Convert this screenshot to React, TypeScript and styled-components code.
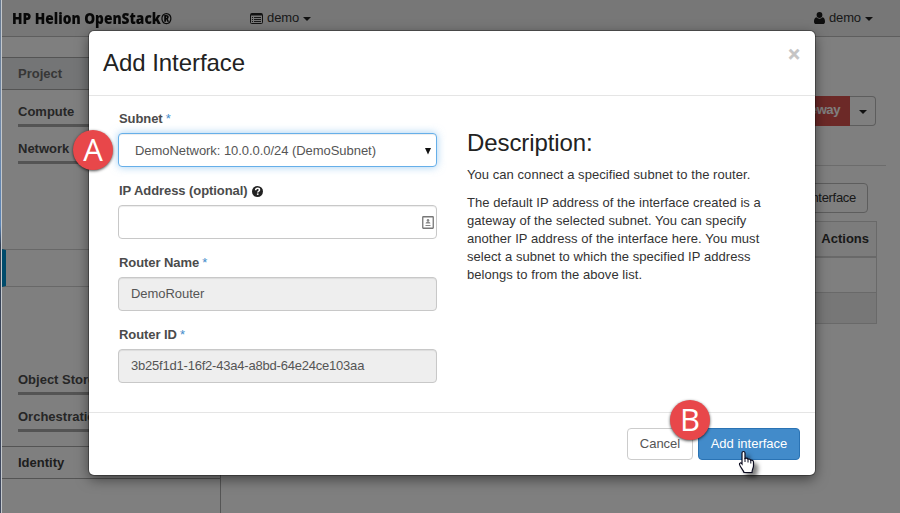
import React from "react";
import styled, { createGlobalStyle } from "styled-components";

const GlobalStyle = createGlobalStyle`
  *, *::before, *::after { box-sizing: border-box; }
  html, body { margin: 0; padding: 0; overflow: hidden; }
  body { font-family: "Liberation Sans", Arial, sans-serif; font-size: 13px; line-height: 18px; color: #333; }
  h3, h4, p { margin: 0; font-weight: normal; }
  button, input { font-family: inherit; font-size: inherit; }
`;

const Screen = styled.div`
  position: relative;
  width: 900px;
  height: 513px;
  overflow: hidden;
  display: flex;
  background: #fff;
`;

const WindowEdge = styled.div`
  flex: none;
  width: 2px;
  background: linear-gradient(#66788f 0, #7189a8 120px, #5a83b4 225px, #344155 245px, #414a60 100%);
  border-right: 1px solid #c4c8cc;
`;

const Page = styled.div`
  position: relative;
  flex: 1;
  display: flex;
  flex-direction: column;
`;

const TopBar = styled.header`
  flex: none;
  height: 37px;
  display: flex;
  align-items: center;
  background: #efefef;
  border-bottom: 1px solid #bdbdbd;
`;

const Brand = styled.div`
  width: 238px;
  padding: 0 0 1px 10px;
  font-family: "Open Sans", sans-serif;
  font-size: 16.5px;
  font-weight: 800;
  line-height: 36px;
  color: #111;
  white-space: nowrap;
  & > span { display: inline-block; transform: scaleX(0.832); transform-origin: 0 50%; }
`;

const NavMenu = styled.div<{ $right?: boolean }>`
  display: flex;
  align-items: center;
  gap: 4px;
  margin-left: ${(p) => (p.$right ? "auto" : "10px")};
  margin-right: ${(p) => (p.$right ? "27px" : "0")};
  color: #333;
  letter-spacing: -0.1px;
`;

const Caret = styled.i`
  display: block;
  border: 4px solid transparent;
  border-top-color: #222;
  border-bottom: 0;
  margin-top: 2px;
`;

const Columns = styled.div`
  flex: 1;
  display: flex;
`;

const Sidebar = styled.nav`
  flex: none;
  width: 219px;
  padding-top: 20px;
  border-right: 1px solid #aaa;
`;

const SidebarHeading = styled.div<{ $active?: boolean }>`
  height: 33px;
  padding: 7px 0 0 16px;
  font-weight: bold;
  color: ${(p) => (p.$active ? "#6e6e6e" : "#3c3c3c")};
  background: ${(p) => (p.$active ? "#e8ebed" : "#fff")};
  border-top: 1px solid #a8a8a8;
  border-bottom: 1px solid #a8a8a8;
`;

const SidebarGroup = styled.div`
  height: 37px;
  margin-left: 16px;
  padding-top: 13px;
  font-weight: bold;
  color: #4d4d4d;
  border-bottom: 3px solid #a8a8a8;
  white-space: nowrap;
  overflow: hidden;
`;

const SidebarGap = styled.div<{ $h: number }>`
  height: ${(p) => p.$h}px;
`;

const SidebarCurrent = styled.div`
  height: 38px;
  border-left: 4px solid #0096d6;
  border-top: 1px solid #d0d0d0;
  border-bottom: 1px solid #d0d0d0;
`;

const Main = styled.main`
  flex: 1;
  padding: 59px 14px 0 21px;
`;

const RouterActions = styled.div`
  display: flex;
  justify-content: flex-end;
  height: 70px;
  padding-right: 10px;
  border-bottom: 1px solid #d8d8d8;
`;

const DangerButton = styled.div`
  height: 30px;
  width: 118px;
  padding: 5px 10px 0 0;
  font-weight: bold;
  letter-spacing: -0.4px;
  text-align: right;
  color: #fff;
  background: #d9534f;
`;

const DropToggle = styled.div`
  height: 30px;
  width: 26px;
  display: flex;
  align-items: center;
  justify-content: center;
  border: 1px solid #bbb;
  border-left: 0;
  border-radius: 0 4px 4px 0;
`;

const TableTools = styled.div`
  display: flex;
  justify-content: flex-end;
  padding: 17px 18px 8px 0;
`;

const OutlineButton = styled.div`
  width: 116px;
  height: 30px;
  padding: 5px 11px;
  letter-spacing: -0.3px;
  text-align: right;
  border: 1px solid #bbb;
  border-radius: 4px;
`;

const Table = styled.div`
  width: 635px;
  border: 1px solid #d2d2d2;
`;

const TableRow = styled.div<{ $h: number; $kind?: "head" | "foot" }>`
  height: ${(p) => p.$h}px;
  padding: 8px 7px;
  text-align: right;
  font-weight: bold;
  background: ${(p) => (p.$kind === "foot" ? "#efefef" : p.$kind === "head" ? "#f8f8f8" : "#fff")};
  border-bottom: ${(p) => (p.$kind === "head" ? "2px solid #d2d2d2" : p.$kind === "foot" ? "0" : "1px solid #d2d2d2")};
`;

const Backdrop = styled.div`
  position: absolute;
  inset: 0;
  background: rgba(0, 0, 0, 0.5);
`;

const Dialog = styled.section`
  position: absolute;
  left: 87px;
  top: 31px;
  width: 726px;
  height: 444px;
  display: flex;
  flex-direction: column;
  background: #fff;
  border-radius: 5px;
  box-shadow: 0 0 0 1px rgba(0, 0, 0, 0.3), 0 4px 13px rgba(0, 0, 0, 0.5);
`;

const DialogHeader = styled.div`
  flex: none;
  height: 65px;
  display: flex;
  justify-content: space-between;
  padding: 15px 15px 0 14px;
  border-bottom: 1px solid #e5e5e5;
`;

const DialogTitle = styled.h3`
  font-size: 24px;
  line-height: 34px;
  letter-spacing: -0.05px;
  color: #222;
`;

const CloseButton = styled.button`
  align-self: flex-start;
  display: block;
  padding: 0;
  border: 0;
  background: none;
  font-size: 20px;
  font-weight: bold;
  line-height: 16px;
  color: #c4c4c4;
  -webkit-text-stroke: 0.5px #c4c4c4;
`;

const DialogBody = styled.div`
  height: 317px;
  display: flex;
  padding: 14px 30px 0 29px;
  border-bottom: 1px solid #e5e5e5;
`;

const Form = styled.div`
  width: 319px;
  display: flex;
  flex-direction: column;
`;

const Field = styled.div`
  height: 72px;
`;

const Label = styled.label`
  display: flex;
  align-items: center;
  gap: 4px;
  height: 18px;
  margin-bottom: 5px;
  padding-left: 1px;
  font-weight: bold;
  letter-spacing: -0.07px;
  color: #4b4b4b;
  & > b { margin-left: -1px; font-weight: normal; color: #428bca; }
`;

const Control = styled.div<{ $focus?: boolean; $disabled?: boolean; $tight?: boolean }>`
  height: 34px;
  display: flex;
  align-items: center;
  justify-content: space-between;
  padding: ${(p) => (p.$focus ? "2px 5px 0 16px" : "0 2px 0 12px")};
  letter-spacing: ${(p) => (p.$tight ? "-0.21px" : "-0.05px")};
  color: #555;
  border: 1px solid ${(p) => (p.$focus ? "#66afe9" : "#c8c8c8")};
  border-radius: 4px;
  background: ${(p) => (p.$disabled ? "#eee" : "#fff")};
  box-shadow: inset 0 1px 1px rgba(0, 0, 0, 0.075)${(p) => (p.$focus ? ", 0 0 8px rgba(102, 175, 233, 0.6)" : "")};
`;

const Description = styled.div`
  margin-left: 30px;
  padding-top: 17px;
  width: 310px;
  color: #333;
`;

const DescriptionTitle = styled.h3`
  font-size: 24px;
  line-height: 32px;
  letter-spacing: -0.1px;
  margin-bottom: 7px;
  color: #222;
`;

const Paragraph = styled.p`
  margin-bottom: 10px;
  letter-spacing: 0.055px;
  white-space: nowrap;
`;

const DialogFooter = styled.div`
  display: flex;
  justify-content: flex-end;
  gap: 5px;
  padding: 15px 15px 0 0;
`;

const Button = styled.button<{ $primary?: boolean }>`
  width: ${(p) => (p.$primary ? 102 : 66)}px;
  height: 32px;
  padding: 0;
  line-height: 18px;
  color: ${(p) => (p.$primary ? "#fff" : "#555")};
  background: ${(p) => (p.$primary ? "#428bca" : "#fff")};
  border: 1px solid ${(p) => (p.$primary ? "#2a73b4" : "#ccc")};
  border-radius: 4px;
`;

const Marker = styled.div<{ $x: number; $y: number }>`
  position: absolute;
  left: ${(p) => p.$x}px;
  top: ${(p) => p.$y}px;
  width: 40px;
  height: 40px;
  border-radius: 50%;
  background: #e8474a;
  color: #fff;
  font-family: "Open Sans", sans-serif;
  font-size: 31px;
  line-height: 38px;
  text-align: center;
  box-shadow: 0 1px 3px rgba(0, 0, 0, 0.7);
`;

const Pointer = styled.svg`
  position: absolute;
  left: 736px;
  top: 449px;
  filter: drop-shadow(4px 4px 2px rgba(0, 0, 0, 0.5));
`;

const ListIcon = () => (
  <svg width="13" height="11" viewBox="0 0 13 11">
    <rect x="0.5" y="0.5" width="12" height="10" rx="1" fill="none" stroke="#222" />
    <path d="M1 1.500h11" stroke="#222" strokeWidth="2" />
    <path d="M2 4.500h1M4 4.500h7M2 6.500h1M4 6.500h7M2 8.500h1M4 8.500h7" stroke="#333" />
  </svg>
);

const UserIcon = () => (
  <svg width="11" height="12" viewBox="0 0 11 12" fill="#1c1c1c">
    <circle cx="5.5" cy="3" r="2.9" />
    <path d="M2.4 5.2C.7 5.4 0 7.2 0 9.7 0 11.1.9 12 2.2 12h6.6c1.3 0 2.2-.9 2.2-2.3 0-2.5-.7-4.3-2.4-4.5a4 4 0 0 1-6.2 0z" />
  </svg>
);

const HelpIcon = () => (
  <svg width="11" height="11" viewBox="0 0 11 11">
    <circle cx="5.5" cy="5.5" r="5.5" fill="#222" />
    <path d="M3.6 4.2C3.7 2.9 4.5 2.3 5.6 2.3c1.1 0 1.9.7 1.9 1.6 0 1.4-1.8 1.3-1.8 2.6" fill="none" stroke="#fff" strokeWidth="1.5" />
    <path d="M4.9 7.4h1.6v1.5H4.9z" fill="#fff" />
  </svg>
);

const ContactIcon = () => (
  <svg width="12" height="13" viewBox="0 0 12 13">
    <rect x="0.75" y="0.75" width="10.5" height="11.5" rx="0.5" fill="#fff" stroke="#777" strokeWidth="1.3" />
    <circle cx="6" cy="4.4" r="1.3" fill="#888" />
    <path d="M3.6 7.6c0-1.4 1-1.9 2.4-1.9s2.4.5 2.4 1.9zM3.5 9h5v1h-5z" fill="#888" />
  </svg>
);

const SelectArrow = () => (
  <svg width="6" height="7" viewBox="0 0 6 7">
    <path d="M0 0h6L3 6.500z" fill="#111" />
  </svg>
);

const fields = [
  { label: "Router Name", value: "DemoRouter" },
  { label: "Router ID", value: "3b25f1d1-16f2-43a4-a8bd-64e24ce103aa", tight: true },
];

export default function App() {
  return (
    <Screen>
      <GlobalStyle />
      <WindowEdge />
      <Page>
        <TopBar>
          <Brand><span>HP Helion OpenStack®</span></Brand>
          <NavMenu><ListIcon />demo<Caret /></NavMenu>
          <NavMenu $right><UserIcon />demo<Caret /></NavMenu>
        </TopBar>
        <Columns>
          <Sidebar>
            <SidebarHeading $active>Project</SidebarHeading>
            <SidebarGroup>Compute</SidebarGroup>
            <SidebarGroup>Network</SidebarGroup>
            <SidebarGap $h={85} />
            <SidebarCurrent />
            <SidebarGap $h={71} />
            <SidebarGroup>Object Store</SidebarGroup>
            <SidebarGroup>Orchestration</SidebarGroup>
            <SidebarGap $h={14} />
            <SidebarHeading>Identity</SidebarHeading>
          </Sidebar>
          <Main>
            <RouterActions>
              <DangerButton>Clear Gateway</DangerButton>
              <DropToggle><Caret /></DropToggle>
            </RouterActions>
            <TableTools><OutlineButton>Add Interface</OutlineButton></TableTools>
            <Table>
              <TableRow $h={36} $kind="head">Actions</TableRow>
              <TableRow $h={35} />
              <TableRow $h={30} $kind="foot" />
            </Table>
          </Main>
        </Columns>
        <Backdrop />
        <Dialog>
          <DialogHeader>
            <DialogTitle>Add Interface</DialogTitle>
            <CloseButton>×</CloseButton>
          </DialogHeader>
          <DialogBody>
            <Form>
              <Field>
                <Label>Subnet <b>*</b></Label>
                <Control $focus>DemoNetwork: 10.0.0.0/24 (DemoSubnet)<SelectArrow /></Control>
              </Field>
              <Field>
                <Label>IP Address (optional) <HelpIcon /></Label>
                <Control><span /><ContactIcon /></Control>
              </Field>
              {fields.map((f) => (
                <Field key={f.label}>
                  <Label>{f.label} <b>*</b></Label>
                  <Control $disabled $tight={f.tight}>{f.value}</Control>
                </Field>
              ))}
            </Form>
            <Description>
              <DescriptionTitle>Description:</DescriptionTitle>
              <Paragraph>You can connect a specified subnet to the router.</Paragraph>
              <Paragraph>
                The default IP address of the interface created is a<br />
                gateway of the selected subnet. You can specify<br />
                another IP address of the interface here. You must<br />
                select a subnet to which the specified IP address<br />
                belongs to from the above list.
              </Paragraph>
            </Description>
          </DialogBody>
          <DialogFooter>
            <Button>Cancel</Button>
            <Button $primary>Add interface</Button>
          </DialogFooter>
        </Dialog>
      </Page>
      <Marker $x={73} $y={130}>A</Marker>
      <Marker $x={670} $y={400}>B</Marker>
      <Pointer width="22" height="26" viewBox="0 0 22 26">
        <path d="M7.5 2.5c1 0 1.5.6 1.5 1.5v5.5c1.8-.6 2.7 0 3 .8 1.4-.5 2.4 0 2.7 1 1.7-.4 2.8.4 2.8 2v3.7c0 2-1.5 3.500-1.500 6.500H8c-.6-2.500-4-5.500-4.500-8-.3-1.700 1.200-2.200 2.500-.5V4c0-.9.500-1.500 1.500-1.500z" fill="#fff" stroke="#0a0a1e" strokeWidth="1.2" />
        <path d="M9 9v4M12 10.500v3M14.800 11.500v3" stroke="#0a0a1e" />
      </Pointer>
    </Screen>
  );
}
